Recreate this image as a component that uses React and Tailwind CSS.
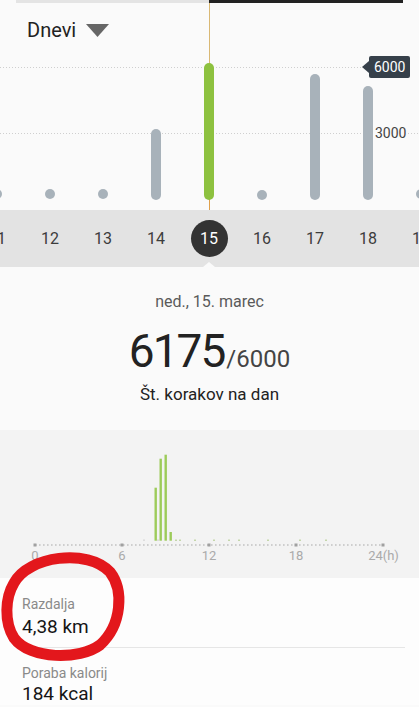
import React from "react";

const days = [11, 12, 13, 14, 15, 16, 17, 18, 19];

export default function App() {
  return (
    <div
      className="relative w-[419px] h-[707px] overflow-hidden bg-[#fafafa]"
      style={{ fontFamily: "Roboto, 'Noto Sans', Arial, sans-serif" }}
    >
      {/* Weekly chart */}
      <div className="relative h-[210px]">
        <svg className="absolute inset-0" width="419" height="210" viewBox="0 0 419 210">
          <line x1="0" y1="67.5" x2="362" y2="67.5" stroke="#cfcfcf" strokeWidth="1" strokeDasharray="1 2" />
          <line x1="0" y1="133.5" x2="370" y2="133.5" stroke="#cfcfcf" strokeWidth="1" strokeDasharray="1 2" />
          <line x1="408" y1="133.5" x2="419" y2="133.5" stroke="#cfcfcf" strokeWidth="1" strokeDasharray="1 2" />
          <line x1="209.5" y1="3" x2="209.5" y2="70" stroke="#d9b874" strokeWidth="1" />
          <line x1="209.5" y1="196" x2="209.5" y2="210" stroke="#e0a04a" strokeWidth="1" />
          <circle cx="-3" cy="194" r="5" fill="#a8b2ba" />
          <circle cx="50" cy="194" r="5" fill="#a8b2ba" />
          <circle cx="103" cy="194" r="5" fill="#a8b2ba" />
          <rect x="151" y="129" width="10" height="71" rx="5" fill="#a8b2ba" />
          <rect x="204" y="63" width="10" height="137" rx="5" fill="#8dc13f" />
          <circle cx="262" cy="195" r="5" fill="#a8b2ba" />
          <rect x="310" y="74" width="10" height="126" rx="5" fill="#a8b2ba" />
          <rect x="363" y="86" width="10" height="114" rx="5" fill="#a8b2ba" />
          <circle cx="421" cy="194" r="5" fill="#a8b2ba" />
        </svg>

        <div className="relative flex mx-[16px] h-[3px]">
          <div className="w-[193px] bg-[#e4e4e4]" />
          <div className="flex-1 bg-[#222222]" />
        </div>

        <div className="relative flex items-center pl-[27px] pt-[14px]">
          <span className="text-[20px] leading-[26px] text-[#222]">Dnevi</span>
          <svg className="ml-[10px] mt-[1px]" width="23" height="13" viewBox="0 0 23 13">
            <path d="M0 0 H23 L11.5 13 Z" fill="#666" />
          </svg>
        </div>

        {/* goal badge */}
        <div className="absolute left-[362px] top-[56px] flex items-center h-[22px]">
          <div className="w-0 h-0 border-t-[6px] border-b-[6px] border-r-[7px] border-t-transparent border-b-transparent border-r-[#36404a]" />
          <div className="h-[22px] px-[5px] flex items-center bg-[#36404a] rounded-[2px] text-white text-[14px]">6000</div>
        </div>
        <div className="absolute left-[375px] top-[124px] text-[14px] leading-[18px] text-[#444]">3000</div>
      </div>

      {/* Day strip */}
      <div className="relative h-[57px] bg-[#e3e3e3] overflow-hidden">
        <div className="flex h-full items-center ml-[-29.5px]">
          {days.map((d) => (
            <div key={d} className="w-[53px] shrink-0 flex justify-center items-center">
              {d === 15 ? (
                <div className="w-[37px] h-[37px] rounded-full bg-[#333333] flex items-center justify-center text-white text-[16px]">
                  15
                </div>
              ) : (
                <span className="text-[16px] text-[#3c3c3c]">{d}</span>
              )}
            </div>
          ))}
        </div>
        <div className="absolute left-[203px] bottom-0 w-0 h-0 border-l-[6px] border-r-[6px] border-b-[5px] border-l-transparent border-r-transparent border-b-[#fafafa]" />
      </div>

      {/* Summary */}
      <div className="h-[163px] flex flex-col items-center bg-[#fafafa]">
        <div className="pt-[25px] text-[16px] leading-[20px] text-[#5a5a5a]">ned., 15. marec</div>
        <div className="mt-[14px] flex items-baseline leading-[50px]">
          <span className="text-[46px] tracking-[-2px] text-[#222]">6175</span>
          <span className="ml-[2px] text-[24px] text-[#444]">/6000</span>
        </div>
        <div className="mt-[-1px] text-[17px] leading-[22px] text-[#222]">Št. korakov na dan</div>
      </div>

      {/* Hourly histogram */}
      <div className="relative h-[148px] bg-[#f3f3f3]">
        <svg className="absolute inset-0" width="419" height="148" viewBox="0 0 419 148">
          <line x1="35" y1="115" x2="383" y2="115" stroke="#c2c2c2" strokeWidth="1.6" strokeDasharray="1.6 2.4" />
          {[35, 122, 209, 296, 383].map((x) => (
            <rect key={x} x={x - 1.5} y="113.5" width="3" height="3" fill="#a0a0a0" />
          ))}
          <rect x="154.5" y="57.7" width="2.4" height="53" fill="#9dcb5a" />
          <rect x="159.5" y="28.7" width="2.4" height="82" fill="#9dcb5a" />
          <rect x="164.5" y="24.7" width="2.4" height="86" fill="#9dcb5a" />
          <rect x="169.5" y="102" width="2.4" height="8.7" fill="#9dcb5a" />
          {[175, 179, 194, 213, 228, 238, 267, 299, 325].map((x) => (
            <rect key={x} x={x} y="109.6" width="2" height="1.2" fill="#b9cf98" />
          ))}
          {[143, 157].map((x) => (
            <rect key={x} x={x} y="109.6" width="2" height="1" fill="#d0d0d0" />
          ))}
        </svg>
        <span className="absolute left-[35px] top-[118px] -translate-x-1/2 text-[13px] leading-[16px] text-[#aaaaaa]">0</span>
        <span className="absolute left-[122px] top-[118px] -translate-x-1/2 text-[13px] leading-[16px] text-[#aaaaaa]">6</span>
        <span className="absolute left-[209px] top-[118px] -translate-x-1/2 text-[13px] leading-[16px] text-[#aaaaaa]">12</span>
        <span className="absolute left-[296px] top-[118px] -translate-x-1/2 text-[13px] leading-[16px] text-[#aaaaaa]">18</span>
        <span className="absolute left-[383.5px] top-[118px] -translate-x-1/2 text-[13px] leading-[16px] text-[#aaaaaa]">24(h)</span>
      </div>

      {/* Details list */}
      <div className="bg-[#fdfdfd] px-[22px]">
        <div className="pt-[17px] pb-[9px] border-b border-[#e6e6e6] mr-[-8px] pr-[8px]">
          <div className="text-[14px] leading-[18px] text-[#8a8a8a]">Razdalja</div>
          <div className="mt-[3px] text-[19px] leading-[22px] text-[#151515]">4,38 km</div>
        </div>
        <div className="pt-[16px]">
          <div className="text-[14px] leading-[18px] text-[#8a8a8a]">Poraba kalorij</div>
          <div className="mt-[1px] text-[19px] leading-[22px] text-[#151515]">184 kcal</div>
        </div>
      </div>

      {/* Hand-drawn red circle annotation */}
      <svg className="absolute left-0 top-[540px] pointer-events-none" width="140" height="130" viewBox="0 540 140 130">
        <path
          d="M14 583 C 28 556, 88 548, 110 572 C 124 590, 122 625, 100 645 C 80 660, 30 660, 14 638 C 4 622, 5 598, 14 583 Z"
          fill="none"
          stroke="#e3171c"
          strokeWidth="11"
          strokeLinejoin="round"
        />
      </svg>
    </div>
  );
}
